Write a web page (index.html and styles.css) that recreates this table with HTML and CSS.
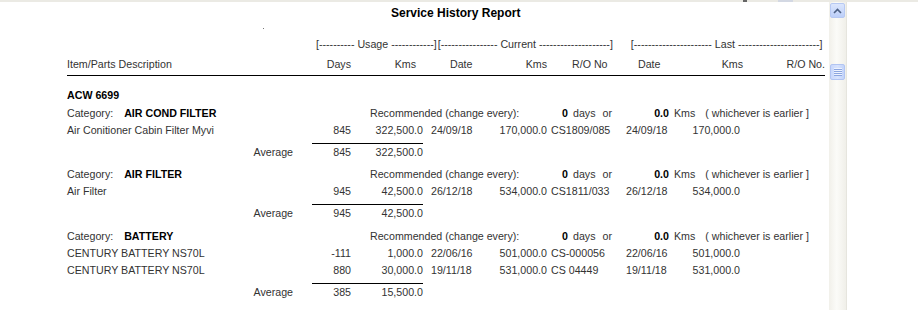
FILE: index.html
```html
<!DOCTYPE html>
<html>
<head>
<meta charset="utf-8">
<title>Service History Report</title>
<link rel="stylesheet" href="styles.css">
</head>
<body>
<div class="topbar"><span class="frag-a"></span><span class="frag-b"></span></div>
<div class="window">
  <div class="report">
    <div class="title">Service History Report</div>
    <div class="spacer"><i class="dot"></i></div>

    <div class="groups">
      <span class="g-usage">[---------- Usage ------------]</span>
      <span class="g-current">[---------------- Current --------------------]</span>
      <span class="g-last">[---------------------- Last -----------------------]</span>
    </div>

    <div class="row head">
      <span>Item/Parts Description</span>
      <span class="r">Days</span>
      <span class="r h-kms1">Kms</span>
      <span class="h-date1">Date</span>
      <span class="r">Kms</span>
      <span class="h-ro">R/O No</span>
      <span class="h-date2">Date</span>
      <span class="r">Kms</span>
      <span class="r">R/O No.</span>
    </div>
    <div class="rule"></div>

    <div class="vehicle">ACW 6699</div>

    <div class="sec">
      <div class="cat-row">
        <div class="cat">Category: <b>AIR COND FILTER</b></div>
        <div class="rec-lbl"><span>Recommended (change every):</span><b>0</b></div>
        <span class="rec-days">days</span><span class="or">or</span>
        <b class="rec-kms">0.0</b><span class="kms-u">Kms</span>
        <span class="earlier">( whichever is earlier ]</span>
      </div>
      <div class="row">
        <span>Air Conitioner Cabin Filter Myvi</span>
        <span class="r">845</span><span class="r">322,500.0</span>
        <span class="c-date">24/09/18</span><span class="r">170,000.0</span><span class="c-ro">CS1809/085</span>
        <span class="l-date">24/09/18</span><span class="r l-kms">170,000.0</span><span></span>
      </div>
      <div class="sumline"></div>
      <div class="row">
        <span class="r avg">Average</span>
        <span class="r">845</span><span class="r">322,500.0</span>
      </div>
    </div>

    <div class="sec">
      <div class="cat-row">
        <div class="cat">Category: <b>AIR FILTER</b></div>
        <div class="rec-lbl"><span>Recommended (change every):</span><b>0</b></div>
        <span class="rec-days">days</span><span class="or">or</span>
        <b class="rec-kms">0.0</b><span class="kms-u">Kms</span>
        <span class="earlier">( whichever is earlier ]</span>
      </div>
      <div class="row">
        <span>Air Filter</span>
        <span class="r">945</span><span class="r">42,500.0</span>
        <span class="c-date">26/12/18</span><span class="r">534,000.0</span><span class="c-ro">CS1811/033</span>
        <span class="l-date">26/12/18</span><span class="r l-kms">534,000.0</span><span></span>
      </div>
      <div class="sumline"></div>
      <div class="row">
        <span class="r avg">Average</span>
        <span class="r">945</span><span class="r">42,500.0</span>
      </div>
    </div>

    <div class="sec">
      <div class="cat-row">
        <div class="cat">Category: <b>BATTERY</b></div>
        <div class="rec-lbl"><span>Recommended (change every):</span><b>0</b></div>
        <span class="rec-days">days</span><span class="or">or</span>
        <b class="rec-kms">0.0</b><span class="kms-u">Kms</span>
        <span class="earlier">( whichever is earlier ]</span>
      </div>
      <div class="row">
        <span>CENTURY BATTERY NS70L</span>
        <span class="r">-111</span><span class="r">1,000.0</span>
        <span class="c-date">22/06/16</span><span class="r">501,000.0</span><span class="c-ro">CS-000056</span>
        <span class="l-date">22/06/16</span><span class="r l-kms">501,000.0</span><span></span>
      </div>
      <div class="row">
        <span>CENTURY BATTERY NS70L</span>
        <span class="r">880</span><span class="r">30,000.0</span>
        <span class="c-date">19/11/18</span><span class="r">531,000.0</span><span class="c-ro">CS 04449</span>
        <span class="l-date">19/11/18</span><span class="r l-kms">531,000.0</span><span></span>
      </div>
      <div class="sumline"></div>
      <div class="row">
        <span class="r avg">Average</span>
        <span class="r">385</span><span class="r">15,500.0</span>
      </div>
    </div>
  </div>

  <div class="vscroll">
    <div class="sb-btn">
      <svg width="9" height="6" viewBox="0 0 9 6"><polyline points="1,5 4.5,1.5 8,5" fill="none" stroke="#4d6185" stroke-width="1.6"/></svg>
    </div>
    <div class="sb-thumb">
      <svg width="8" height="8" viewBox="0 0 8 8">
        <rect x="0" y="0" width="8" height="1" fill="#eef3fe"/>
        <rect x="0" y="1" width="8" height="1" fill="#8ca6e0"/>
        <rect x="0" y="2" width="8" height="1" fill="#eef3fe"/>
        <rect x="0" y="3" width="8" height="1" fill="#8ca6e0"/>
        <rect x="0" y="4" width="8" height="1" fill="#eef3fe"/>
        <rect x="0" y="5" width="8" height="1" fill="#8ca6e0"/>
        <rect x="0" y="6" width="8" height="1" fill="#eef3fe"/>
        <rect x="0" y="7" width="8" height="1" fill="#8ca6e0"/>
      </svg>
    </div>
  </div>
</div>
</body>
</html>
```

FILE: styles.css
```css
html, body {
  margin: 0;
  padding: 0;
  background: #ffffff;
}
body {
  font-family: "Liberation Sans", Arial, sans-serif;
  font-size: 8pt;
  color: #333333;
  overflow: hidden;
  width: 918px;
  height: 310px;
}
b { color: #000000; font-weight: bold; }

.topbar {
  height: 2px;
  background: #ebeae4;
  display: flex;
}
.frag-a { margin-left: 743px; width: 4px; height: 2px; background: #666666; }
.frag-b { margin-left: 31px; width: 15px; height: 2px; background: #d3d8e3; }

.window {
  display: flex;
  height: 308px;
}
.report {
  width: 829px;
  flex: 0 0 829px;
  box-sizing: border-box;
  padding-left: 67px;
}

.title {
  padding: 3px 0 0 324px;
  font-size: 12px;
  font-weight: bold;
  line-height: 17px;
  color: #000000;
}
.spacer {
  height: 14px;
  box-sizing: border-box;
  padding-top: 6px;
}
.dot {
  display: block;
  width: 1px;
  height: 1px;
  background: #777777;
  margin-left: 196px;
}

.groups {
  display: flex;
  padding-left: 249px;
  line-height: 17px;
  white-space: nowrap;
}
.g-current { margin-left: 1px; }
.g-last { margin-left: 18px; }

.row {
  display: grid;
  grid-template-columns: 233px 51px 72px 57px 67px 73px 60px 63px 82px;
  line-height: 17px;
  white-space: nowrap;
}
.head { padding-top: 3px; }
.r { text-align: right; }
.h-kms1 { padding-right: 7px; }
.h-date1 { padding-left: 27px; }
.h-ro { padding-left: 25px; }
.h-date2 { padding-left: 18px; }
.c-date { padding-left: 8px; }
.c-ro { padding-left: 4px; }
.l-date { padding-left: 6px; }
.l-kms { padding-right: 3px; }
.avg { padding-right: 7px; }

.rule {
  margin-top: 2px;
  width: 758px;
  height: 1px;
  background: #000000;
}

.vehicle {
  margin-top: 9.5px;
  line-height: 19px;
  font-weight: bold;
  color: #000000;
}

.sec { margin-bottom: 5.5px; }
.cat-row {
  display: flex;
  line-height: 17px;
  white-space: nowrap;
}
.cat { width: 303px; flex: 0 0 303px; }
.cat b { margin-left: 8px; }
.rec-lbl {
  width: 198px;
  flex: 0 0 198px;
  display: flex;
  justify-content: space-between;
}
.rec-days { margin-left: 5px; }
.or { margin-left: 7px; }
.rec-kms { width: 57px; text-align: right; }
.kms-u { margin-left: 5px; }
.earlier { margin-left: 10px; }

.sumline {
  margin: 4px 0 0 245px;
  width: 111px;
  height: 1px;
  background: #000000;
}

.vscroll {
  width: 17px;
  flex: 0 0 17px;
  background: linear-gradient(to right, #f1f0ea, #fbfbf8 45%, #f0efe9);
  border-right: 1px solid #e6e5de;
  display: flex;
  flex-direction: column;
  align-items: center;
}
.sb-btn {
  width: 15px;
  height: 15px;
  margin-top: 1px;
  box-sizing: border-box;
  border: 1px solid #b7c9f3;
  border-radius: 2px;
  background: linear-gradient(#dce6fd, #bccff9);
  display: flex;
  align-items: center;
  justify-content: center;
}
.sb-thumb {
  width: 15px;
  height: 16px;
  margin-top: 46px;
  box-sizing: border-box;
  border: 1px solid #b2c5f2;
  border-radius: 2px;
  background: linear-gradient(to right, #c9d8fc, #d8e3fd 50%, #c2d3fa);
  display: flex;
  align-items: center;
  justify-content: center;
}
```
